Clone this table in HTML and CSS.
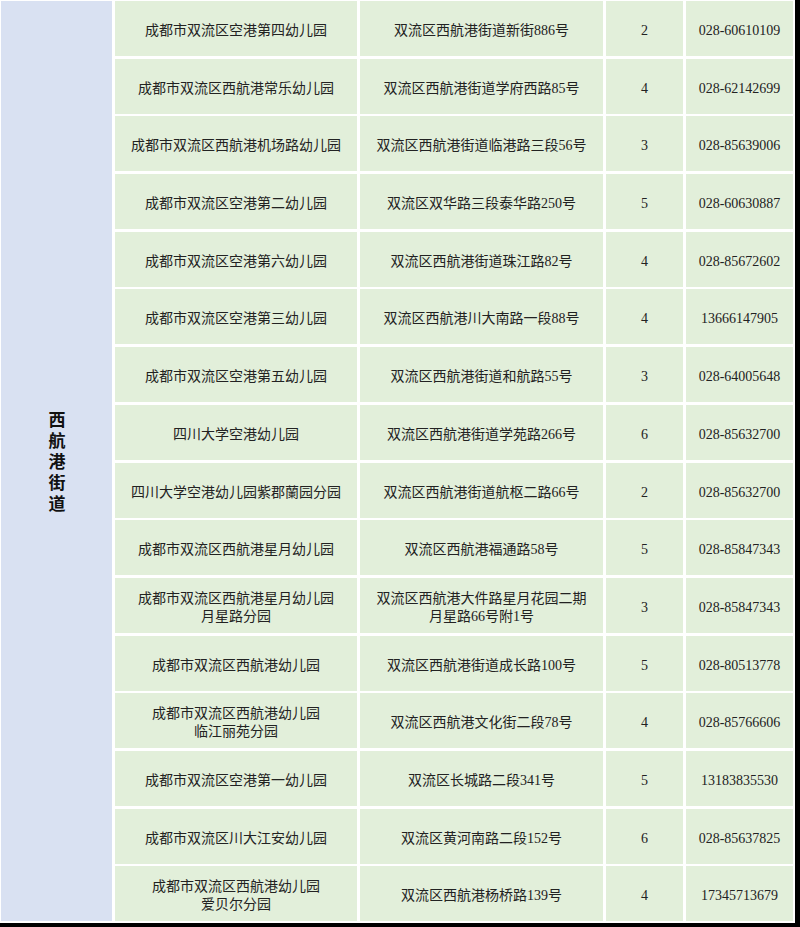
FILE: index.html
```html
<!DOCTYPE html>
<html lang="zh-CN">
<head>
<meta charset="utf-8">
<link rel="stylesheet" href="styles.css">
</head>
<body>
<div class="frame">
  <div class="table">
    <div class="cell district"><span class="vtext">西航港街道</span></div>

    <div class="cell">成都市双流区空港第四幼儿园</div>
    <div class="cell">双流区西航港街道新街886号</div>
    <div class="cell num">2</div>
    <div class="cell num">028-60610109</div>

    <div class="cell">成都市双流区西航港常乐幼儿园</div>
    <div class="cell">双流区西航港街道学府西路85号</div>
    <div class="cell num">4</div>
    <div class="cell num">028-62142699</div>

    <div class="cell">成都市双流区西航港机场路幼儿园</div>
    <div class="cell">双流区西航港街道临港路三段56号</div>
    <div class="cell num">3</div>
    <div class="cell num">028-85639006</div>

    <div class="cell">成都市双流区空港第二幼儿园</div>
    <div class="cell">双流区双华路三段泰华路250号</div>
    <div class="cell num">5</div>
    <div class="cell num">028-60630887</div>

    <div class="cell">成都市双流区空港第六幼儿园</div>
    <div class="cell">双流区西航港街道珠江路82号</div>
    <div class="cell num">4</div>
    <div class="cell num">028-85672602</div>

    <div class="cell">成都市双流区空港第三幼儿园</div>
    <div class="cell">双流区西航港川大南路一段88号</div>
    <div class="cell num">4</div>
    <div class="cell num">13666147905</div>

    <div class="cell">成都市双流区空港第五幼儿园</div>
    <div class="cell">双流区西航港街道和航路55号</div>
    <div class="cell num">3</div>
    <div class="cell num">028-64005648</div>

    <div class="cell">四川大学空港幼儿园</div>
    <div class="cell">双流区西航港街道学苑路266号</div>
    <div class="cell num">6</div>
    <div class="cell num">028-85632700</div>

    <div class="cell">四川大学空港幼儿园紫郡蘭园分园</div>
    <div class="cell">双流区西航港街道航枢二路66号</div>
    <div class="cell num">2</div>
    <div class="cell num">028-85632700</div>

    <div class="cell">成都市双流区西航港星月幼儿园</div>
    <div class="cell">双流区西航港福通路58号</div>
    <div class="cell num">5</div>
    <div class="cell num">028-85847343</div>

    <div class="cell">成都市双流区西航港星月幼儿园<br>月星路分园</div>
    <div class="cell">双流区西航港大件路星月花园二期<br>月星路66号附1号</div>
    <div class="cell num">3</div>
    <div class="cell num">028-85847343</div>

    <div class="cell">成都市双流区西航港幼儿园</div>
    <div class="cell">双流区西航港街道成长路100号</div>
    <div class="cell num">5</div>
    <div class="cell num">028-80513778</div>

    <div class="cell">成都市双流区西航港幼儿园<br>临江丽苑分园</div>
    <div class="cell">双流区西航港文化街二段78号</div>
    <div class="cell num">4</div>
    <div class="cell num">028-85766606</div>

    <div class="cell">成都市双流区空港第一幼儿园</div>
    <div class="cell">双流区长城路二段341号</div>
    <div class="cell num">5</div>
    <div class="cell num">13183835530</div>

    <div class="cell">成都市双流区川大江安幼儿园</div>
    <div class="cell">双流区黄河南路二段152号</div>
    <div class="cell num">6</div>
    <div class="cell num">028-85637825</div>

    <div class="cell">成都市双流区西航港幼儿园<br>爱贝尔分园</div>
    <div class="cell">双流区西航港杨桥路139号</div>
    <div class="cell num">4</div>
    <div class="cell num">17345713679</div>
  </div>
</div>
</body>
</html>
```
FILE: styles.css
```css
* { box-sizing: border-box; }
html, body { margin: 0; padding: 0; background: #fff; }
body {
  font-family: "Liberation Serif", "Noto Sans CJK SC", sans-serif;
  color: #222;
}
.frame {
  width: 800px;
  height: 927px;
  background: #fff;
  border-right: 5px solid #000;
  border-bottom: 4px solid #000;
  padding: 1px 0 0 1px;
  overflow: hidden;
}
.table {
  display: grid;
  grid-template-columns: 111px 242px 243px 77px 107px;
  grid-template-rows: repeat(16, 55px);
  column-gap: 3px;
  row-gap: 2.7px;
}
.cell {
  background: #e2efda;
  display: flex;
  align-items: center;
  justify-content: center;
  text-align: center;
  font-size: 14px;
  line-height: 18px;
  padding-top: 5px;
  white-space: nowrap;
}
.num { font-size: 14px; }
.district {
  grid-column: 1;
  grid-row: 1 / span 16;
  background: #d9e1f2;
  padding-top: 4px;
}
.vtext {
  writing-mode: vertical-rl;
  font-family: "Noto Sans CJK SC", sans-serif;
  font-weight: 700;
  font-size: 17px;
  letter-spacing: 4px;
  line-height: 20px;
  color: #111;
}
```
